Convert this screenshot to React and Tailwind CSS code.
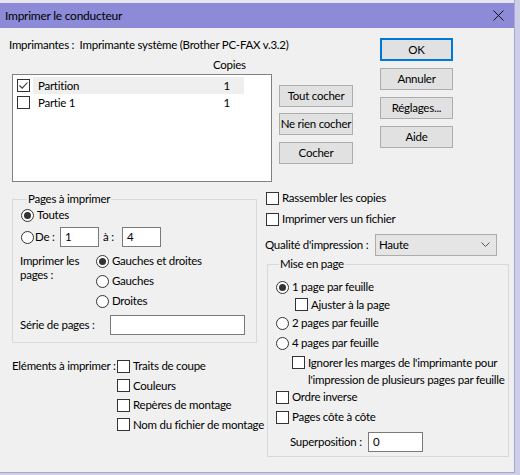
import React from 'react';

function Radio({ checked }) {
    return (
        <span className="w-[13px] h-[13px] rounded-full border border-[#333] bg-white flex items-center justify-center shrink-0">
            {checked && <span className="w-[7px] h-[7px] rounded-full bg-[#333]"></span>}
        </span>
    );
}

function Check({ checked }) {
    return (
        <span className="w-[13px] h-[13px] border border-[#333] bg-white flex items-center justify-center shrink-0">
            {checked && (
                <svg width="11" height="11" viewBox="0 0 11 11">
                    <path d="M1.5 5.5 L4.2 8.2 L9.5 2.5" fill="none" stroke="#333" strokeWidth="1.1" />
                </svg>
            )}
        </span>
    );
}

function Btn({ children, className = '' }) {
    return (
        <div className={`h-[22px] bg-[#e1e1e1] border border-[#adadad] flex items-center justify-center whitespace-nowrap ${className}`}>
            {children}
        </div>
    );
}

function TextBox({ value, className = '' }) {
    return (
        <div className={`h-[20px] bg-white border border-[#7a7a7a] flex items-center pl-[4px] shrink-0 ${className}`}>
            {value}
        </div>
    );
}

function Option({ type, checked, label, className = '' }) {
    return (
        <div className={`h-[16px] flex items-center ${className}`}>
            {type === 'radio' ? <Radio checked={checked} /> : <Check checked={checked} />}
            <span className="ml-[3px] whitespace-nowrap">{label}</span>
        </div>
    );
}

export default function App() {
    return (
        <div className="w-[520px] h-[475px] bg-[#cfcee9] font-['Lato',sans-serif] text-[11.5px] tracking-[-0.25px] leading-[16px] text-black overflow-hidden">
            <div className="w-[515px] border-r border-[#a9a8d6]">
                {/* Title bar */}
                <div className="h-[3px] bg-[#e6e6ef]"></div>
                <div className="h-[25px] bg-[#8d8bd8] flex items-center justify-between pl-[5px] pr-[10px]">
                    <span className="text-[12px]">Imprimer le conducteur</span>
                    <svg width="11" height="11" viewBox="0 0 11 11">
                        <path d="M0.5 0.5 L10.5 10.5 M10.5 0.5 L0.5 10.5" stroke="#111" strokeWidth="1" />
                    </svg>
                </div>

                <div className="h-[444px] bg-[#f0f0f0] flex flex-col">
                    {/* Top section */}
                    <div className="flex items-start">
                        <div className="ml-[9px] w-[263px]">
                            <div className="mt-[9px] whitespace-nowrap">
                                Imprimantes :&nbsp; Imprimante système (Brother PC-FAX v.3.2)
                            </div>
                            <div className="mt-[4px] pl-[204px]">Copies</div>
                            <div className="mt-[1px] ml-[3px] w-[260px] h-[108px] bg-white border border-[#828282] pt-[2px]">
                                <div className="h-[17px] flex items-center">
                                    <span className="ml-[4px]"><Check checked /></span>
                                    <div className="ml-[3px] w-[211px] h-[17px] bg-[#efefef] flex items-center justify-between pl-[5px] pr-[14px]">
                                        <span>Partition</span>
                                        <span>1</span>
                                    </div>
                                </div>
                                <div className="h-[17px] flex items-center">
                                    <span className="ml-[4px]"><Check /></span>
                                    <div className="ml-[3px] w-[211px] h-[17px] flex items-center justify-between pl-[5px] pr-[14px]">
                                        <span>Partie 1</span>
                                        <span>1</span>
                                    </div>
                                </div>
                            </div>
                        </div>

                        <div className="ml-[7px] w-[74px] flex flex-col">
                            <Btn className="mt-[57px]">Tout cocher</Btn>
                            <Btn className="mt-[6px]">Ne rien cocher</Btn>
                            <Btn className="mt-[7px]">Cocher</Btn>
                        </div>

                        <div className="ml-[27px] w-[73px] flex flex-col">
                            <div className="mt-[10px] h-[23px] bg-[#e1e1e1] border-2 border-[#0078d7] flex items-center justify-center">OK</div>
                            <Btn className="mt-[7px]">Annuler</Btn>
                            <Btn className="mt-[7px]">Réglages...</Btn>
                            <Btn className="mt-[7px]">Aide</Btn>
                        </div>
                    </div>

                    {/* Bottom section */}
                    <div className="flex items-start">
                        <div className="ml-[12px] w-[245px] shrink-0">
                            <fieldset className="mt-[9px] border border-[#d9d9d9] pl-[8px] pb-[7px]">
                                <legend className="ml-[6px] px-[1px] leading-[16px]">Pages à imprimer</legend>
                                <Option type="radio" checked label="Toutes" />
                                <div className="mt-[4px] h-[20px] flex items-center">
                                    <Radio />
                                    <span className="ml-[1px] w-[25px]">De :</span>
                                    <TextBox value="1" className="w-[39px]" />
                                    <span className="ml-[4px] w-[19px]">à :</span>
                                    <TextBox value="4" className="w-[39px]" />
                                </div>
                                <div className="mt-[6px] flex items-start">
                                    <div className="ml-[-1px] w-[76px] shrink-0 pt-[1px] leading-[14px]">
                                        Imprimer les
                                        <br />
                                        pages :
                                    </div>
                                    <div className="flex flex-col gap-[4px]">
                                        <Option type="radio" checked label="Gauches et droites" />
                                        <Option type="radio" label="Gauches" />
                                        <Option type="radio" label="Droites" />
                                    </div>
                                </div>
                                <div className="mt-[6px] flex items-center">
                                    <span className="ml-[-1px] w-[90px] shrink-0 whitespace-nowrap">Série de pages :</span>
                                    <TextBox value="" className="w-[135px]" />
                                </div>
                            </fieldset>

                            <div className="mt-[15px] flex items-start">
                                <span className="w-[105px] shrink-0 whitespace-nowrap">Eléments à imprimer :</span>
                                <div className="flex flex-col gap-[3.5px]">
                                    <Option type="check" label="Traits de coupe" />
                                    <Option type="check" label="Couleurs" />
                                    <Option type="check" label="Repères de montage" />
                                    <Option type="check" label="Nom du fichier de montage" />
                                </div>
                            </div>
                        </div>

                        <div className="ml-[8px] w-[245px] shrink-0">
                            <Option type="check" label="Rassembler les copies" className="mt-[8px] ml-[1px]" />
                            <Option type="check" label="Imprimer vers un fichier" className="mt-[5px] ml-[1px]" />
                            <div className="mt-[7px] flex items-center">
                                <span className="w-[110px] shrink-0 whitespace-nowrap">Qualité d'impression :</span>
                                <div className="w-[122px] h-[22px] bg-[#e5e5e5] border border-[#acacac] flex items-center justify-between pl-[3px] pr-[6px]">
                                    <span>Haute</span>
                                    <svg width="9" height="6" viewBox="0 0 9 6">
                                        <path d="M0.5 0.5 L4.5 4.5 L8.5 0.5" fill="none" stroke="#555" strokeWidth="1" />
                                    </svg>
                                </div>
                            </div>

                            <fieldset className="ml-[2px] w-[242px] border border-[#d9d9d9] pl-[8px] pb-[4px]">
                                <legend className="ml-[3px] px-[1px] leading-[16px]">Mise en page</legend>
                                <Option type="radio" checked label="1 page par feuille" className="mt-[7px]" />
                                <Option type="check" label="Ajuster à la page" className="mt-[1.5px] ml-[19px]" />
                                <Option type="radio" label="2 pages par feuille" className="mt-[2.5px]" />
                                <Option type="radio" label="4 pages par feuille" className="mt-[4px]" />
                                <div className="mt-[2.5px] ml-[16px] flex items-start">
                                    <span className="mt-[2px]"><Check /></span>
                                    <span className="ml-[3px] leading-[17px] whitespace-nowrap">
                                        Ignorer les marges de l'imprimante pour
                                        <br />
                                        l'impression de plusieurs pages par feuille
                                    </span>
                                </div>
                                <Option type="check" label="Ordre inverse" className="mt-[1.5px]" />
                                <Option type="check" label="Pages côte à côte" className="mt-[4px]" />
                                <div className="mt-[7px] ml-[14px] flex items-center">
                                    <span className="w-[78px] shrink-0 whitespace-nowrap">Superposition :</span>
                                    <TextBox value="0" className="w-[55px]" />
                                </div>
                            </fieldset>
                        </div>
                    </div>
                </div>
                <div className="h-[1px] bg-[#a9a8c8]"></div>
            </div>
        </div>
    );
}
